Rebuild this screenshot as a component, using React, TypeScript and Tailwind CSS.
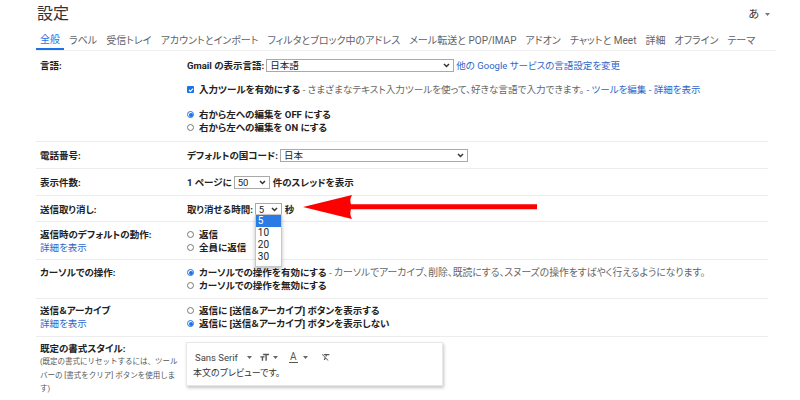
import React from "react";

const Chevron = () => (
  <svg width="7" height="5" viewBox="0 0 7 5" className="shrink-0">
    <path d="M1 1l2.5 2.5L6 1" fill="none" stroke="#333" strokeWidth="1.5" />
  </svg>
);

const Caret = ({ color = "#666" }: { color?: string }) => (
  <svg width="5" height="3" viewBox="0 0 5 3" className="shrink-0">
    <path d="M0 0h5L2.5 3z" fill={color} />
  </svg>
);

const Sel = ({ value, className }: { value: string; className: string }) => (
  <span
    className={
      "inline-flex items-center justify-between h-[13px] border border-[#a9a9a9] bg-white pl-[3px] pr-[3px] font-normal text-[#222] shrink-0 " +
      className
    }
  >
    <span className="leading-[11px]">{value}</span>
    <Chevron />
  </span>
);

const Radio = ({ on }: { on?: boolean }) =>
  on ? (
    <span className="w-[7px] h-[7px] rounded-full border border-[#1a73e8] flex items-center justify-center shrink-0">
      <span className="w-[4px] h-[4px] rounded-full bg-[#1a73e8]" />
    </span>
  ) : (
    <span className="w-[7px] h-[7px] rounded-full border border-[#777] shrink-0" />
  );

const RadioLine = ({ on, children }: { on?: boolean; children: React.ReactNode }) => (
  <div className="flex items-center h-[13px] whitespace-nowrap">
    <Radio on={on} />
    <span className="ml-[5px]">{children}</span>
  </div>
);

const Link = ({ children }: { children: React.ReactNode }) => (
  <span className="text-[#2f66c9] font-normal text-[9.5px]">{children}</span>
);

const tabs = [
  "全般",
  "ラベル",
  "受信トレイ",
  "アカウントとインポート",
  "フィルタとブロック中のアドレス",
  "メール転送と POP/IMAP",
  "アドオン",
  "チャットと Meet",
  "詳細",
  "オフライン",
  "テーマ",
];

export default function App() {
  return (
    <div className="w-[800px] h-[400px] bg-white overflow-hidden relative text-[#222] text-[10px] leading-[13px] font-['Roboto','Noto_Sans_CJK_JP',sans-serif] [font-feature-settings:'palt']">
      {/* header */}
      <div className="flex items-center justify-between h-[28px] pl-[37px] pr-[30px]">
        <div className="text-[16px] leading-[20px] text-[#333]">設定</div>
        <div className="flex items-center gap-[6px] text-[11px] text-[#333]">
          <span>あ</span>
          <Caret color="#777" />
        </div>
      </div>

      {/* tabs */}
      <div className="ml-[36px] mr-[24px] border-b border-[#efefef] flex h-[23px] gap-[1px] text-[#5f6368]">
        {tabs.map((t, i) => (
          <div
            key={t}
            className={
              i === 0
                ? "px-[4px] flex items-center border-b-2 border-[#1a73e8] text-[#1a73e8] pt-[2px]"
                : "px-[4px] flex items-center pt-[2px]"
            }
          >
            {t}
          </div>
        ))}
      </div>

      {/* rows */}
      <div className="ml-[36px] mr-[32px] text-[9.5px]">
        {/* 言語 */}
        <div className="flex border-b border-[#ececec] pt-[7px] pb-[7px]">
          <div className="w-[151px] pl-[4px] font-bold h-[14px] flex items-center">言語:</div>
          <div className="flex-1">
            <div className="flex items-center h-[14px] whitespace-nowrap">
              <span className="font-bold mr-[2px]">Gmail の表示言語:</span>
              <Sel value="日本語" className="w-[188px]" />
              <span className="ml-[2px]">
                <Link>他の Google サービスの言語設定を変更</Link>
              </span>
            </div>
            <div className="flex items-center h-[13px] mt-[11px] whitespace-nowrap">
              <span className="w-[7px] h-[7px] bg-[#1a73e8] rounded-[1px] flex items-center justify-center shrink-0">
                <svg width="6" height="6" viewBox="0 0 6 6">
                  <path d="M1 3l1.4 1.4L5 1.6" fill="none" stroke="#fff" strokeWidth="1.2" />
                </svg>
              </span>
              <span className="ml-[5px] font-bold">入力ツールを有効にする</span>
              <span className="text-[#666] text-[9.6px]">&nbsp;- さまざまなテキスト入力ツールを使って、好きな言語で入力できます。</span>
              <Link>&nbsp;- ツールを編集 - 詳細を表示</Link>
            </div>
            <div className="mt-[12px] font-bold">
              <RadioLine on>右から左への編集を OFF にする</RadioLine>
              <RadioLine>右から左への編集を ON にする</RadioLine>
            </div>
          </div>
        </div>

        {/* 電話番号 */}
        <div className="flex border-b border-[#ececec] pt-[7px] pb-[6px]">
          <div className="w-[151px] pl-[4px] font-bold">電話番号:</div>
          <div className="flex-1 flex items-center h-[13px] whitespace-nowrap">
            <span className="font-bold mr-[2px]">デフォルトの国コード:</span>
            <Sel value="日本" className="w-[188px]" />
          </div>
        </div>

        {/* 表示件数 */}
        <div className="flex border-b border-[#ececec] pt-[7px] pb-[6px]">
          <div className="w-[151px] pl-[4px] font-bold">表示件数:</div>
          <div className="flex-1 flex items-center h-[13px] whitespace-nowrap font-bold">
            <span className="mr-[2px]">1 ページに</span>
            <Sel value="50" className="w-[36px]" />
            <span className="ml-[3px]">件のスレッドを表示</span>
          </div>
        </div>

        {/* 送信取り消し */}
        <div className="flex border-b border-[#ececec] pt-[7px] pb-[5px]">
          <div className="w-[151px] pl-[4px] font-bold">送信取り消し:</div>
          <div className="flex-1 flex items-center h-[13px] whitespace-nowrap font-bold">
            <span className="mr-[2px]">取り消せる時間:</span>
            <span className="relative">
              <Sel value="5" className="w-[27px]" />
              <div className="absolute left-0 top-[11px] w-[27px] bg-white border border-[#c8c8c8] shadow-[0_2px_4px_rgba(0,0,0,0.25)] font-normal text-[10px] z-10 pb-[3px]">
                <div className="h-[12px] leading-[12px] pl-[2px] bg-[#2c7be5] text-white">5</div>
                <div className="h-[12px] leading-[12px] pl-[2px]">10</div>
                <div className="h-[12px] leading-[12px] pl-[2px]">20</div>
                <div className="h-[12px] leading-[12px] pl-[2px]">30</div>
              </div>
            </span>
            <span className="ml-[3px]">秒</span>
          </div>
        </div>

        {/* 返信時 */}
        <div className="flex border-b border-[#ececec] pt-[6px] pb-[5px]">
          <div className="w-[151px] pl-[4px]">
            <div className="font-bold">返信時のデフォルトの動作:</div>
            <Link>詳細を表示</Link>
          </div>
          <div className="flex-1 font-bold">
            <RadioLine>返信</RadioLine>
            <RadioLine>全員に返信</RadioLine>
          </div>
        </div>

        {/* カーソル */}
        <div className="flex border-b border-[#ececec] pt-[6px] pb-[6px]">
          <div className="w-[151px] pl-[4px] font-bold">カーソルでの操作:</div>
          <div className="flex-1">
            <RadioLine on>
              <span className="font-bold">カーソルでの操作を有効にする</span>
              <span className="text-[#666] text-[9.8px]"> - カーソルでアーカイブ、削除、既読にする、スヌーズの操作をすばやく行えるようになります。</span>
            </RadioLine>
            <RadioLine>
              <span className="font-bold">カーソルでの操作を無効にする</span>
            </RadioLine>
          </div>
        </div>

        {/* 送信&アーカイブ */}
        <div className="flex border-b border-[#ececec] pt-[5px] pb-[6px]">
          <div className="w-[151px] pl-[4px]">
            <div className="font-bold">送信＆アーカイブ</div>
            <Link>詳細を表示</Link>
          </div>
          <div className="flex-1 font-bold">
            <RadioLine>返信に [送信＆アーカイブ] ボタンを表示する</RadioLine>
            <RadioLine on>返信に [送信＆アーカイブ] ボタンを表示しない</RadioLine>
          </div>
        </div>

        {/* 既定の書式 */}
        <div className="flex pt-[5px]">
          <div className="w-[151px] pl-[4px] pr-[4px]">
            <div className="font-bold">既定の書式スタイル:</div>
            <div className="text-[7.5px] leading-[13.5px] text-[#555] [font-feature-settings:normal]">
              (既定の書式にリセットするには、ツールバーの [書式をクリア] ボタンを使用します)
            </div>
          </div>
          <div className="flex-1">
            <div className="ml-[-1px] w-[257px] h-[44px] bg-white border border-[#e8e8e8] shadow-[1px_2px_3px_rgba(0,0,0,0.22)] pt-[5px]">
              <div className="flex items-center h-[18px] pl-[8px] text-[9.5px] text-[#444]">
                <span>Sans Serif</span>
                <span className="ml-[9px]"><Caret /></span>
                <svg width="11" height="11" viewBox="0 0 24 24" className="ml-[7px]">
                  <path d="M9 4v3h5v12h3V7h5V4H9zm-6 8h3v7h3v-7h3V9H3v3z" fill="#555" />
                </svg>
                <span className="ml-[3px]"><Caret /></span>
                <span className="ml-[11px] flex flex-col items-center leading-[9px] text-[10px] text-[#555]">
                  <span>A</span>
                  <span className="w-[9px] h-[1px] bg-[#555] mt-[1px]" />
                </span>
                <span className="ml-[5px]"><Caret /></span>
                <svg width="10" height="10" viewBox="0 0 24 24" className="ml-[13px]">
                  <path d="M3.27 5L2 6.27l6.97 6.97L6.5 19h3l1.57-3.66L16.73 21 18 19.73 3.55 5.27 3.27 5zM6 5v.18L8.82 8h2.4l-.72 1.68 2.1 2.1L14.21 8H20V5H6z" fill="#555" />
                </svg>
              </div>
              <div className="pl-[6px] mt-[1px] text-[9px] leading-[12px] text-[#333]">本文のプレビューです。</div>
            </div>
          </div>
        </div>
      </div>

      {/* red annotation arrow */}
      <svg className="absolute left-[300px] top-[193px]" width="240" height="28" viewBox="0 0 240 28">
        <path d="M3 14L52 2C50 6 50 8 51 11.3H237V16.3H51C50 20 50 22 52 26Z" fill="#ff0000" />
      </svg>
    </div>
  );
}
